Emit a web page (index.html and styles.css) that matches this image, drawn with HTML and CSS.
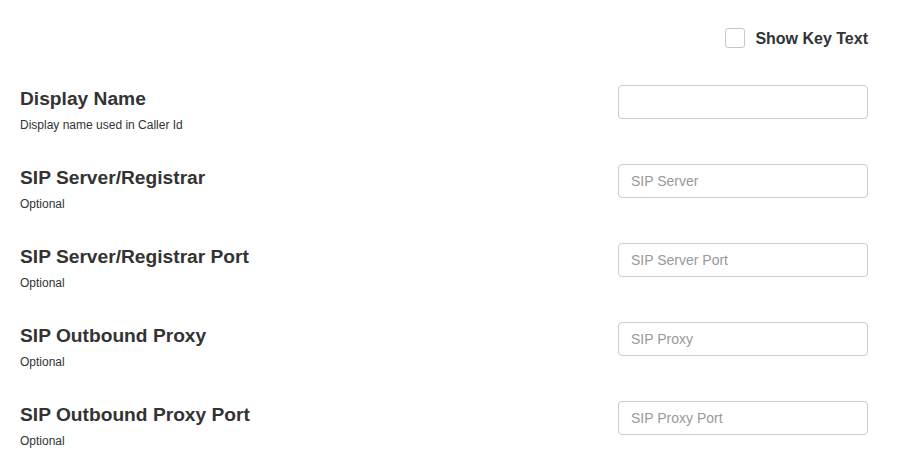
FILE: index.html
```html
<!DOCTYPE html>
<html>
<head>
<meta charset="utf-8">
<link rel="stylesheet" href="styles.css">
</head>
<body>
<div class="page">
  <div class="header">
    <label class="keytext"><input type="checkbox" class="check"><span class="keylabel">Show Key Text</span></label>
  </div>
  <div class="row">
    <div class="info"><div class="title">Display Name</div><div class="sub">Display name used in Caller Id</div></div>
    <input class="field" type="text">
  </div>
  <div class="row">
    <div class="info"><div class="title">SIP Server/Registrar</div><div class="sub">Optional</div></div>
    <input class="field" type="text" placeholder="SIP Server">
  </div>
  <div class="row">
    <div class="info"><div class="title">SIP Server/Registrar Port</div><div class="sub">Optional</div></div>
    <input class="field" type="text" placeholder="SIP Server Port">
  </div>
  <div class="row">
    <div class="info"><div class="title">SIP Outbound Proxy</div><div class="sub">Optional</div></div>
    <input class="field" type="text" placeholder="SIP Proxy">
  </div>
  <div class="row">
    <div class="info"><div class="title">SIP Outbound Proxy Port</div><div class="sub">Optional</div></div>
    <input class="field" type="text" placeholder="SIP Proxy Port">
  </div>
</div>
</body>
</html>
```
FILE: styles.css
```css
html, body {
  margin: 0;
  padding: 0;
  background: #fff;
}
body {
  font-family: "Liberation Sans", Arial, sans-serif;
  color: #333;
}
.page {
  padding: 28px 40px 0 20px;
}
.header {
  display: flex;
  justify-content: flex-end;
  height: 20px;
  margin-bottom: 37px;
}
.keytext {
  display: flex;
  align-items: center;
  gap: 10px;
  font-size: 16px;
  font-weight: bold;
  color: #333;
}
.keylabel {
  padding-top: 2px;
}
.check {
  appearance: none;
  -webkit-appearance: none;
  margin: 0;
  width: 20px;
  height: 20px;
  border: 1px solid #c8c8c8;
  border-radius: 3px;
  background: #fff;
  box-sizing: border-box;
}
.row {
  display: flex;
  justify-content: space-between;
  align-items: flex-start;
  height: 79px;
}
.info {
  padding-top: 3px;
}
.title {
  font-size: 19.2px;
  font-weight: bold;
  line-height: 22px;
  color: #333;
}
.sub {
  margin-top: 7px;
  font-size: 12px;
  line-height: 17px;
  color: #333;
}
.field {
  width: 250px;
  height: 34px;
  box-sizing: border-box;
  border: 1px solid #ccc;
  border-radius: 4px;
  padding: 6px 12px;
  font-family: "Liberation Sans", Arial, sans-serif;
  font-size: 14px;
  color: #555;
  background: #fff;
  margin: 0;
  outline: none;
}
.field::placeholder {
  color: #999;
}
```
